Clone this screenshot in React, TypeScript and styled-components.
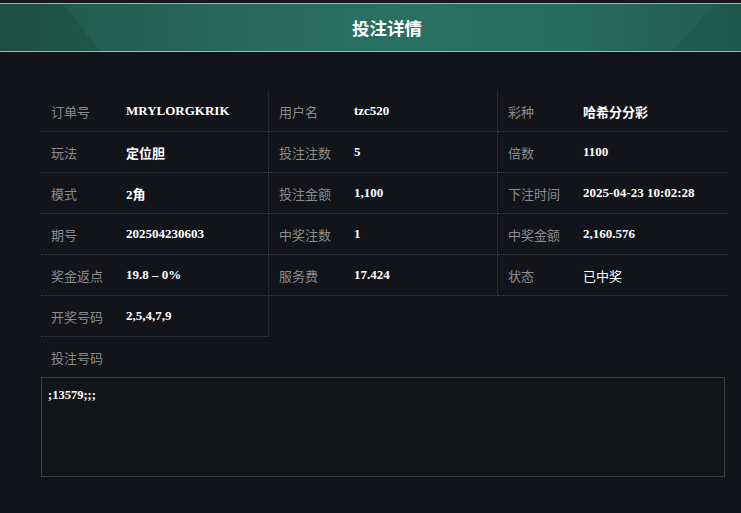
import React from "react";
import styled, { createGlobalStyle } from "styled-components";

const GlobalStyle = createGlobalStyle`
  html, body {
    margin: 0;
    padding: 0;
    background: #121419;
  }
  body {
    font-family: "Noto Sans CJK SC", "Noto Sans", sans-serif;
  }
`;

const Page = styled.div`
  width: 741px;
  height: 513px;
  background: #121419;
  overflow: hidden;
`;

const TopStrip = styled.div`
  height: 3px;
  background: #16181c;
`;

const Header = styled.div`
  position: relative;
  height: 47px;
  display: flex;
  align-items: center;
  justify-content: center;
  padding-left: 33px;
  border-top: 1px solid #9fb1ac;
  border-bottom: 1px solid #a8b4b0;
  background: linear-gradient(90deg, #215648 0%, #266658 25%, #2a7163 55%, #266a5c 80%, #225d50 100%);
  overflow: hidden;

  &::before {
    content: "";
    position: absolute;
    left: 0;
    top: 0;
    width: 100px;
    height: 100%;
    background: rgba(10, 30, 25, 0.12);
    clip-path: polygon(0 0, 63px 0, 100px 100%, 0 100%);
  }

  &::after {
    content: "";
    position: absolute;
    right: 0;
    top: 0;
    width: 70px;
    height: 100%;
    background: rgba(10, 30, 25, 0.1);
    clip-path: polygon(44px 0, 100% 0, 100% 100%, 0 100%, 22px 52%);
  }
`;

const Title = styled.h1`
  position: relative;
  z-index: 1;
  margin: 0;
  color: #ffffff;
  font-size: 17.5px;
  font-weight: 700;
  font-family: "Noto Sans CJK SC", sans-serif;
`;

const Body = styled.div`
  padding: 39px 13px 0 41px;
`;

const Grid = styled.div`
  display: grid;
  grid-template-columns: 228px 229px 230px;
  width: 687px;
`;

const Cell = styled.div<{ $last?: boolean }>`
  display: flex;
  align-items: center;
  height: 40px;
  border-bottom: 1px dotted #3a3d42;
  border-right: ${(p) => (p.$last ? "none" : "1px dotted #3a3d42")};
`;

const Label = styled.span`
  width: 75px;
  padding-left: 10px;
  flex-shrink: 0;
  color: #8a8b8d;
  font-size: 13px;
  font-family: "Noto Sans CJK SC", sans-serif;
`;

const Value = styled.span<{ $plain?: boolean }>`
  color: #ffffff;
  font-size: 13px;
  font-weight: ${(p) => (p.$plain ? 400 : 700)};
  font-family: "Liberation Serif", "Noto Sans CJK SC", serif;
`;

const NumbersLabel = styled.div`
  height: 40px;
  display: flex;
  align-items: center;
  padding-left: 10px;
  color: #8a8b8d;
  font-size: 13px;
`;

const NumbersBox = styled.textarea`
  display: block;
  box-sizing: border-box;
  width: 684px;
  height: 100px;
  margin: 0;
  padding: 10px 6px;
  resize: none;
  background: #131619;
  border: 1px solid #3b3e42;
  color: #ffffff;
  font-family: "Liberation Serif", serif;
  font-weight: 700;
  font-size: 12.5px;
  outline: none;
`;

type Item = { label: string; value: string; plain?: boolean };

const items: Item[] = [
  { label: "订单号", value: "MRYLORGKRIK" },
  { label: "用户名", value: "tzc520" },
  { label: "彩种", value: "哈希分分彩" },
  { label: "玩法", value: "定位胆" },
  { label: "投注注数", value: "5" },
  { label: "倍数", value: "1100" },
  { label: "模式", value: "2角" },
  { label: "投注金额", value: "1,100" },
  { label: "下注时间", value: "2025-04-23 10:02:28" },
  { label: "期号", value: "202504230603" },
  { label: "中奖注数", value: "1" },
  { label: "中奖金额", value: "2,160.576" },
  { label: "奖金返点", value: "19.8 – 0%" },
  { label: "服务费", value: "17.424" },
  { label: "状态", value: "已中奖", plain: true },
  { label: "开奖号码", value: "2,5,4,7,9" },
];

const App: React.FC = () => {
  return (
    <>
      <GlobalStyle />
      <Page>
        <TopStrip />
        <Header>
          <Title>投注详情</Title>
        </Header>
        <Body>
          <Grid>
            {items.map((item, i) => (
              <Cell key={item.label} $last={i % 3 === 2}>
                <Label>{item.label}</Label>
                <Value $plain={item.plain}>{item.value}</Value>
              </Cell>
            ))}
          </Grid>
          <NumbersLabel>投注号码</NumbersLabel>
          <NumbersBox readOnly value=";13579;;;" />
        </Body>
      </Page>
    </>
  );
};

export default App;
